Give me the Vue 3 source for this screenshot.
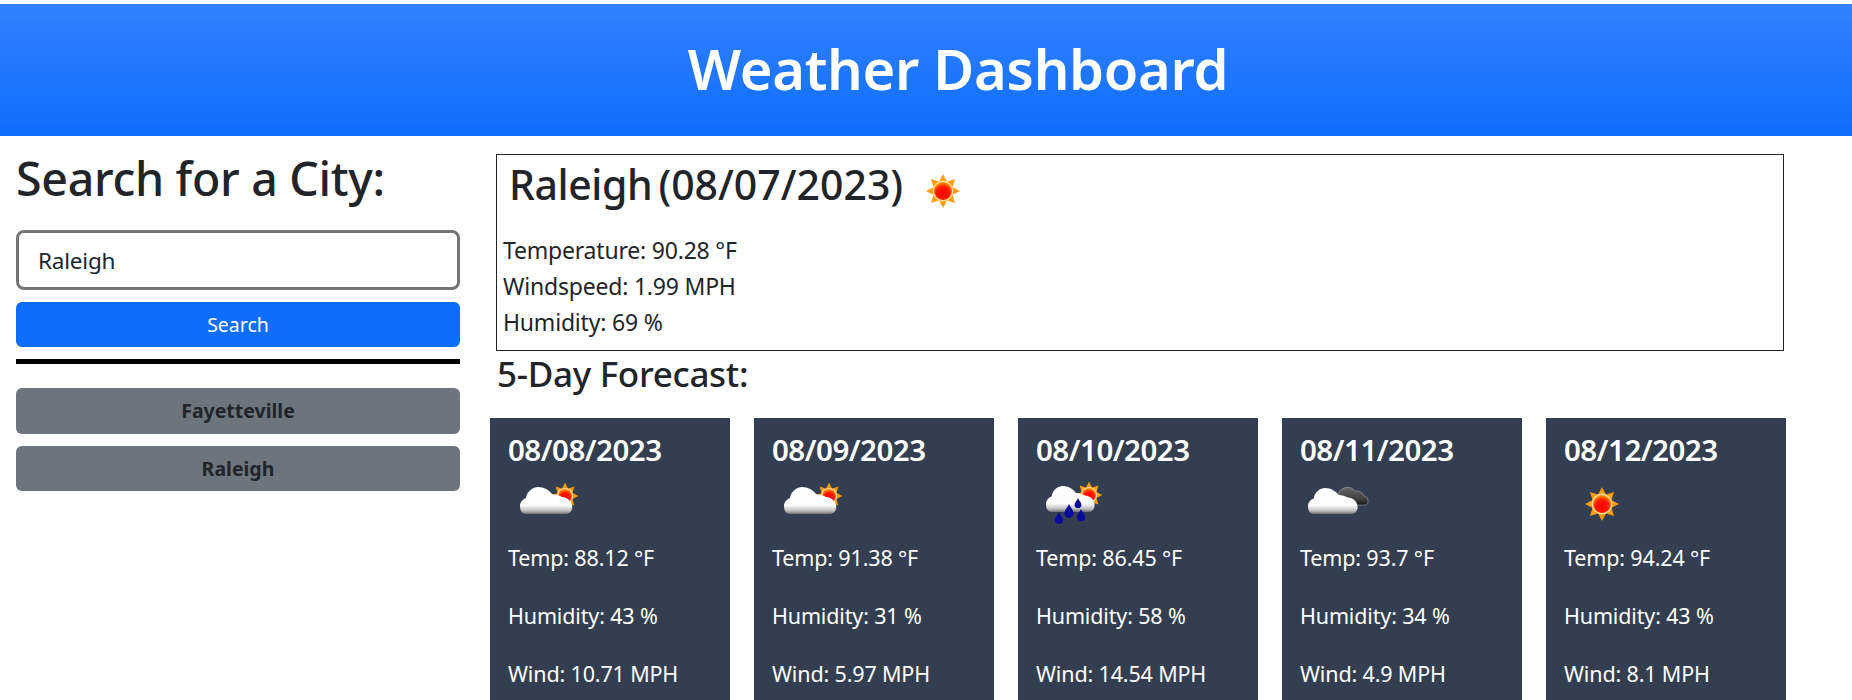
<script setup>
const rays = Array.from({ length: 8 }, (_, i) => {
  const a = (i * Math.PI) / 4
  const p = (r, d) => `${(Math.sin(a + d) * r).toFixed(2)},${(-Math.cos(a + d) * r).toFixed(2)}`
  return [p(17, 0), p(10, 0.42), p(10, -0.42)].join(' ')
})
const days = [
  { date: '08/08/2023', icon: 'few', temp: '88.12', hum: '43', wind: '10.71' },
  { date: '08/09/2023', icon: 'few', temp: '91.38', hum: '31', wind: '5.97' },
  { date: '08/10/2023', icon: 'rain', temp: '86.45', hum: '58', wind: '14.54' },
  { date: '08/11/2023', icon: 'dark', temp: '93.7', hum: '34', wind: '4.9' },
  { date: '08/12/2023', icon: 'sun', temp: '94.24', hum: '43', wind: '8.1' }
]
const drop = 'M0-6C1-3 4-1 4 2A4 4 0 0 1-4 2C-4-1-1-3 0-6Z'
</script>

<template>
  <div class="page">
    <svg class="defs" width="0" height="0" aria-hidden="true">
      <defs>
        <radialGradient id="discFill" cx="50%" cy="62%" r="60%">
          <stop offset="0" stop-color="#ff0000" />
          <stop offset="0.6" stop-color="#ff1a00" />
          <stop offset="1" stop-color="#ff9a00" />
        </radialGradient>
        <linearGradient id="cloudFill" x1="0" y1="0" x2="0" y2="1">
          <stop offset="0" stop-color="#ffffff" />
          <stop offset="0.68" stop-color="#fbfbfb" />
          <stop offset="0.88" stop-color="#bdbdbd" />
          <stop offset="1" stop-color="#6f7276" />
        </linearGradient>
        <linearGradient id="darkFill" x1="0" y1="0" x2="0" y2="1">
          <stop offset="0" stop-color="#6a6a6a" />
          <stop offset="0.7" stop-color="#3c3c3c" />
          <stop offset="1" stop-color="#111111" />
        </linearGradient>
        <filter id="soft" x="-20%" y="-20%" width="140%" height="140%">
          <feGaussianBlur stdDeviation="0.55" />
        </filter>
        <g id="sun" filter="url(#soft)">
          <polygon v-for="(r, i) in rays" :key="i" :points="r" fill="#ff9c0a" />
          <circle r="10.4" fill="#ffdca0" />
          <circle r="9" fill="url(#discFill)" />
        </g>
        <path id="cloud" filter="url(#soft)" fill="url(#cloudFill)"
          d="M6 27C1 27 0 22 0 19C0 15 3 12 6 11C7 4 13 0 18 0C24 0 29 3 32 7C36 8 39 8 42 10C46 10 51 13 52 18C53 22 51 27 46 27Z" />
      </defs>
    </svg>

    <header class="banner"><h1>Weather Dashboard</h1></header>

    <div class="content">
      <aside class="side">
        <h2>Search for a City:</h2>
        <input class="city" type="text" value="Raleigh" />
        <button class="search" type="button">Search</button>
        <hr class="rule" />
        <button class="saved" type="button">Fayetteville</button>
        <button class="saved" type="button">Raleigh</button>
      </aside>

      <main class="main">
        <section class="today">
          <div class="today-head">
            <span class="name">Raleigh</span>
            <span class="when">(08/07/2023)</span>
            <svg class="today-icon" width="50" height="50" viewBox="0 0 50 50">
              <use href="#sun" transform="translate(25 25)" />
            </svg>
          </div>
          <p>Temperature: 90.28 °F</p>
          <p>Windspeed: 1.99 MPH</p>
          <p>Humidity: 69 %</p>
        </section>

        <h3 class="sub">5-Day Forecast:</h3>

        <div class="cards">
          <article v-for="d in days" :key="d.date" class="card">
            <h4>{{ d.date }}</h4>
            <svg class="card-icon" width="80" height="64" viewBox="0 14 80 64">
              <g v-if="d.icon === 'sun'">
                <use href="#sun" transform="translate(38 51)" />
              </g>
              <g v-else-if="d.icon === 'few'">
                <use href="#sun" transform="translate(57 43) scale(.78)" />
                <use href="#cloud" transform="translate(12 34)" />
              </g>
              <g v-else-if="d.icon === 'rain'">
                <use href="#sun" transform="translate(53 42) scale(.78)" />
                <use href="#cloud" transform="translate(10 33) scale(.93 .96)" />
                <path :d="drop" fill="#0a0a9c" transform="translate(42 50) scale(.85)" />
                <path :d="drop" fill="#0a0a9c" transform="translate(33 58) scale(1.15)" />
                <path :d="drop" fill="#0a0a9c" transform="translate(23 65)" />
                <path :d="drop" fill="#0a0a9c" transform="translate(45 62)" />
              </g>
              <g v-else>
                <path filter="url(#soft)" fill="url(#darkFill)"
                  d="M42 52A4 4 0 0 1 38 44A9.5 9.5 0 0 1 55 38A8 8 0 0 1 64 43A5 5 0 0 1 66 52Z"
                  stroke="#b4b4b4" stroke-width=".5" />
                <use href="#cloud" transform="translate(8 35) scale(.95 .96)" />
              </g>
            </svg>
            <p>Temp: {{ d.temp }} °F</p>
            <p>Humidity: {{ d.hum }} %</p>
            <p>Wind: {{ d.wind }} MPH</p>
          </article>
        </div>
      </main>
    </div>
  </div>
</template>

<style>
html, body { margin: 0; background: #fff; overflow: hidden; }
</style>

<style scoped>
.page {
  height: 700px;
  overflow: hidden;
  padding-top: 4px;
  box-sizing: border-box;
  font-family: "Noto Sans", "Open Sans", sans-serif;
  color: #212529;
}
.defs { position: absolute; }
.banner {
  height: 132px;
  display: flex;
  align-items: center;
  justify-content: center;
  padding-left: 64px;
  box-sizing: border-box;
  background: linear-gradient(#3381ff, #0d6efd);
}
h1 {
  margin: 0 0 4px;
  color: #fff;
  font-size: 56px;
  line-height: 64px;
  font-weight: 600;
  letter-spacing: -0.3px;
}
.content { display: flex; gap: 30px; padding-left: 16px; }
.side { width: 444px; display: flex; flex-direction: column; padding-top: 18px; }
h2 {
  margin: 0 0 28px;
  font-size: 46.5px;
  line-height: 48px;
  font-weight: 500;
  letter-spacing: -0.3px;
}
.city {
  height: 60px;
  border: 3px solid #767676;
  border-radius: 8px;
  padding: 0 19px;
  box-sizing: border-box;
  font: 22.5px "Noto Sans", sans-serif;
  letter-spacing: -0.2px;
  color: #212529;
  outline: none;
}
.search, .saved {
  border: 0;
  height: 45px;
  border-radius: 6px;
  font-family: inherit;
  font-size: 19.5px;
  padding: 0;
}
.search { margin-top: 12px; background: #0d6efd; color: #fff; }
.rule { width: 100%; height: 5px; margin: 12px 0 24px; border: 0; background: #000; opacity: 1; }
.saved { background: #6c757d; color: #212529; font-weight: 700; margin-bottom: 12px; height: 45.5px; }
.main { width: 1296px; padding-top: 18px; }
.today {
  width: 1288px;
  height: 197px;
  margin-left: 6px;
  border: 1px solid #212529;
  box-sizing: border-box;
  padding: 0 0 0 6px;
}
.today-head { display: flex; align-items: center; height: 80px; padding-left: 6px; padding-bottom: 22px; box-sizing: border-box; }
.name, .when { font-size: 41px; line-height: 56px; font-weight: 500; }
.name { letter-spacing: -0.4px; }
.when { margin-left: 6px; letter-spacing: 0; }
.today-icon { margin-left: 15px; margin-top: 7px; margin-bottom: -7px; flex: none; }
.today p { margin: 0 0 6px; font-size: 23px; line-height: 30px; letter-spacing: -0.2px; }
.today p:last-child { margin-bottom: 0; }
.sub {
  margin: 4px 0 25px 7px;
  font-size: 35px;
  line-height: 38px;
  font-weight: 500;
  letter-spacing: -0.3px;
}
.cards { display: flex; gap: 24px; }
.card {
  width: 240px;
  flex: none;
  box-sizing: border-box;
  height: 300px;
  padding: 15px 0 0 18px;
  background: #333e50;
  color: #fff;
}
h4 { margin: 0; font-size: 29.5px; line-height: 34px; font-weight: 600; letter-spacing: -0.5px; }
.card-icon { display: block; margin-bottom: 12px; }
.card p { margin: 0 0 28px; font-size: 21.5px; line-height: 30px; letter-spacing: -0.15px; }
</style>
